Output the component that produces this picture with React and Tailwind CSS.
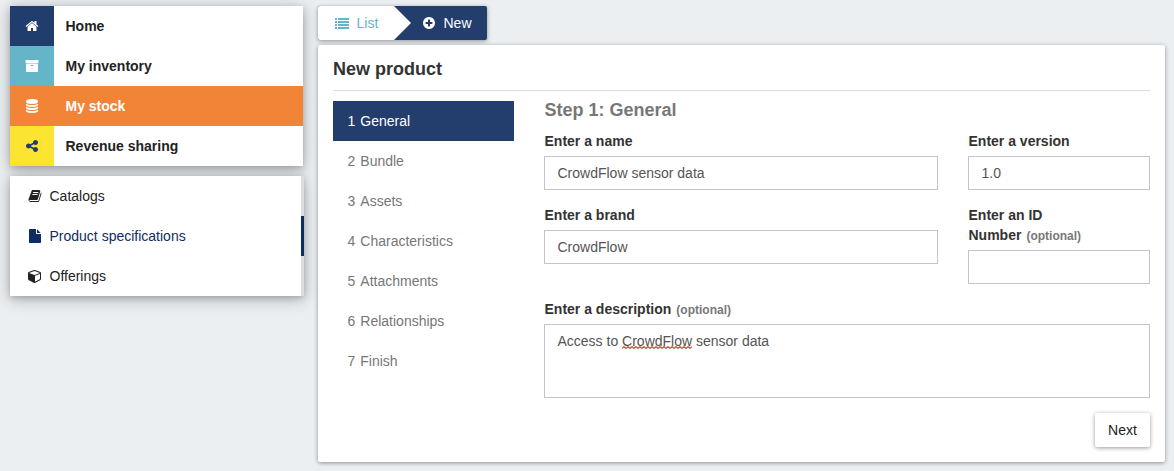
const paths = {
  home: 'M1472 992v480q0 26-19 45t-45 19h-384v-384h-256v384h-384q-26 0-45-19t-19-45v-480q0-1 .5-3t.5-3l575-474 575 474q1 2 1 6zm223-69l-62 74q-8 9-21 11h-3q-13 0-21-7l-692-577-692 577q-12 8-24 7-13-2-21-11l-62-74q-8-10-7-23.5t11-21.5l719-599q32-26 76-26t76 26l244 204v-195q0-14 9-23t23-9h192q14 0 23 9t9 23v408l219 182q10 8 11 21.5t-7 23.5z',
  archive: 'M1088 832q0-26-19-45t-45-19h-256q-26 0-45 19t-19 45 19 45 45 19h256q26 0 45-19t19-45zm576-192v960q0 26-19 45t-45 19h-1408q-26 0-45-19t-19-45v-960q0-26 19-45t45-19h1408q26 0 45 19t19 45zm64-448v256q0 26-19 45t-45 19h-1536q-26 0-45-19t-19-45v-256q0-26 19-45t45-19h1536q26 0 45 19t19 45z',
  database: 'M896 768q237 0 443-43t325-127v170q0 69-103 128t-280 93.5-385 34.5-385-34.5-280-93.5-103-128v-170q119 84 325 127t443 43zm0 768q237 0 443-43t325-127v170q0 69-103 128t-280 93.5-385 34.5-385-34.5-280-93.5-103-128v-170q119 84 325 127t443 43zm0-384q237 0 443-43t325-127v170q0 69-103 128t-280 93.5-385 34.5-385-34.5-280-93.5-103-128v-170q119 84 325 127t443 43zm0-1152q208 0 385 34.5t280 93.5 103 128v128q0 69-103 128t-280 93.5-385 34.5-385-34.5-280-93.5-103-128v-128q0-69 103-128t280-93.5 385-34.5z',
  share: 'M1344 1024q133 0 226.5 93.5t93.5 226.5-93.5 226.5-226.5 93.5-226.5-93.5-93.5-226.5q0-12 2-34l-360-180q-92 86-218 86-133 0-226.5-93.5t-93.5-226.5 93.5-226.5 226.5-93.5q126 0 218 86l360-180q-2-22-2-34 0-133 93.5-226.5t226.5-93.5 226.5 93.5 93.5 226.5-93.5 226.5-226.5 93.5q-126 0-218-86l-360 180q2 22 2 34t-2 34l360 180q92-86 218-86z',
  book: 'M1703 478q40 57 18 129l-275 906q-19 64-76.5 107.5t-122.5 43.5h-923q-77 0-148.5-53.5t-99.5-131.5q-24-67-2-127 0-4 3-27t4-37q1-8-3-21.5t-3-19.5q2-11 8-21t16.5-23.5 16.5-23.5q23-38 45-91.5t30-91.5q3-10 .5-30t-.5-28q3-11 17-28t17-23q21-36 42-92t25-90q1-9-2.5-32t.5-28q4-13 22-30.5t22-22.5q19-26 42.5-84.5t27.5-96.5q1-8-3-25.5t-2-26.5q2-8 9-18t18-23 17-21q8-12 16.5-30.5t15-35 16-36 19.5-32 26.5-23.5 36-11.5 47.5 5.5l-1 3q38-9 51-9h761q74 0 114 56t18 130l-274 906q-36 119-71.5 153.5t-128.5 34.5h-869q-27 0-38 15-11 16-1 43 24 70 144 70h923q29 0 56-15.5t35-41.5l300-987q7-22 5-57 38 15 59 43zm-1064 2q-4 13 2 22.5t20 9.5h608q13 0 25.5-9.5t16.5-22.5l21-64q4-13-2-22.5t-20-9.5h-608q-13 0-25.5 9.5t-16.5 22.5zm-83 256q-4 13 2 22.5t20 9.5h608q13 0 25.5-9.5t16.5-22.5l21-64q4-13-2-22.5t-20-9.5h-608q-13 0-25.5 9.5t-16.5 22.5z',
  file: 'M1152 512v-472q22 14 36 28l408 408q14 14 28 36h-472zm-128 32q0 40 28 68t68 28h544v1056q0 40-28 68t-68 28h-1344q-40 0-68-28t-28-68v-1600q0-40 28-68t68-28h800v544z',
  cube: 'M896 1629l640-349v-636l-640 233v752zm-64-865l698-254-698-254-698 254zm832-252v768q0 35-18 65t-49 47l-704 384q-28 16-61 16t-61-16l-704-384q-31-17-49-47t-18-65v-768q0-40 23-73t61-47l704-256q22-8 44-8t44 8l704 256q38 14 61 47t23 73z',
  list: 'M0 256h256v256h-256zM384 256h1408v256h-1408zM0 640h256v256h-256zM384 640h1408v256h-1408zM0 1024h256v256h-256zM384 1024h1408v256h-1408zM0 1408h256v256h-256zM384 1408h1408v256h-1408z',
  plus: 'M1344 960v-128q0-26-19-45t-45-19h-256v-256q0-26-19-45t-45-19h-128q-26 0-45 19t-19 45v256h-256q-26 0-45 19t-19 45v128q0 26 19 45t45 19h256v256q0 26 19 45t45 19h128q26 0 45-19t19-45v-256h256q26 0 45-19t19-45zm320-64q0 209-103 385.5t-279.5 279.5-385.5 103-385.5-103-279.5-279.5-103-385.5 103-385.5 279.5-279.5 385.5-103 385.5 103 279.5 279.5 103 385.5z',
}

function Icon({ name, className = '' }) {
  return (
    <svg viewBox="0 0 1792 1792" fill="currentColor" className={`size-3.5 shrink-0 ${className}`}>
      <path d={paths[name]} />
    </svg>
  )
}

const mainMenu = [
  { label: 'Home', icon: 'home', row: 'text-[#222]', box: 'bg-[#203d6d] text-white' },
  { label: 'My inventory', icon: 'archive', row: 'text-[#222]', box: 'bg-[#64b5c8] text-white' },
  { label: 'My stock', icon: 'database', row: 'bg-[#f28437] text-white', box: 'text-white' },
  { label: 'Revenue sharing', icon: 'share', row: 'text-[#222]', box: 'bg-[#fbe531] text-[#203d6d]' },
]

const subMenu = [
  { label: 'Catalogs', icon: 'book' },
  { label: 'Product specifications', icon: 'file', active: true },
  { label: 'Offerings', icon: 'cube' },
]

const steps = ['General', 'Bundle', 'Assets', 'Characteristics', 'Attachments', 'Relationships', 'Finish']

function Label({ children, optional }) {
  return (
    <label className="mb-[5px] block pl-[0.5px] font-bold text-[#333]">
      {children}
      {optional && <span className="ml-[5px] text-xs text-[#777]">(optional)</span>}
    </label>
  )
}

function Field({ label, value, optional, className }) {
  return (
    <div className={className}>
      <Label optional={optional}>{label}</Label>
      <input
        defaultValue={value}
        className="block h-[34px] w-full border border-[#c4c4c4] bg-white px-[12.5px] text-[#555] outline-none"
      />
    </div>
  )
}

function Squiggle() {
  const points = Array.from({ length: 36 }, (_, i) => `${i * 2},${i % 2 ? 0.6 : 2.4}`).join(' ')
  return (
    <svg className="absolute top-[15px] left-0 h-[3px] w-[70px]" viewBox="0 0 70 3">
      <polyline points={points} fill="none" stroke="#f0301c" strokeWidth="1.1" />
    </svg>
  )
}

export default function App() {
  return (
    <div className="flex h-[471px] w-[1174px] gap-[14px] overflow-hidden bg-[#ebeff2] pt-1.5 pl-2.5 font-['Liberation_Sans',Arial,sans-serif] text-sm leading-5">
      <aside className="flex w-[294px] shrink-0 flex-col gap-2.5">
        <nav className="w-[293px] bg-white shadow-[0_2px_6px_rgba(0,0,0,0.18),0_3px_16px_rgba(0,0,0,0.25)]">
          {mainMenu.map((m) => (
            <a key={m.label} className={`flex h-10 items-center font-bold ${m.row}`}>
              <span className={`mr-[11.5px] flex h-10 w-11 items-center justify-center ${m.box}`}>
                <Icon name={m.icon} />
              </span>
              {m.label}
            </a>
          ))}
        </nav>
        <nav className="bg-white shadow-[0_2px_6px_rgba(0,0,0,0.18),0_3px_16px_rgba(0,0,0,0.25)]">
          {subMenu.map((m) => (
            <a
              key={m.label}
              className={`flex h-10 items-center gap-2 border-r-[3px] pl-[17.5px] ${
                m.active ? 'border-[#0f2d62] text-[#0f2d62]' : 'border-[#dcdddd] text-[#222]'
              }`}
            >
              <Icon name={m.icon} />
              {m.label}
            </a>
          ))}
        </nav>
      </aside>

      <main className="w-[847px] shrink-0">
        <div className="mb-[5px] flex h-[34px] w-[169px] rounded-xs bg-[#233d6c] text-white shadow-[0_1px_4px_rgba(0,0,0,0.4)]">
          <a className="flex w-[76px] items-center gap-[7.5px] rounded-l-xs bg-white pl-[17px] text-[#64b5c8]">
            <Icon name="list" />
            List
          </a>
          <svg className="h-[34px] w-[17px]" viewBox="0 0 17 34">
            <path d="M0 0L17 17L0 34Z" fill="#fff" />
          </svg>
          <a className="flex items-center gap-2 pl-[10.5px]">
            <Icon name="plus" />
            New
          </a>
        </div>

        <section className="h-[417px] rounded-xs bg-white px-[15px] shadow-[0_1px_4px_rgba(0,0,0,0.4)]">
          <h1 className="h-[46px] border-b border-[#ddd] pt-3.5 text-lg leading-5 font-bold text-[#333]">New product</h1>
          <div className="flex gap-[30px] pt-2.5">
            <ol className="w-[181px] shrink-0">
              {steps.map((s, i) => (
                <li
                  key={s}
                  className={`flex h-10 items-center gap-[5px] pl-[14.5px] ${i === 0 ? 'bg-[#233d6c] text-white' : 'text-[#777]'}`}
                >
                  <span>{i + 1}</span>
                  <span>{s}</span>
                </li>
              ))}
            </ol>
            <form className="flex-1">
              <h2 className="mb-[11px] pl-[0.5px] text-lg leading-[19px] font-bold text-[#777]">Step 1: General</h2>
              <div className="grid grid-cols-[394px_182px] gap-x-[30px] gap-y-[15px]">
                <Field label="Enter a name" value="CrowdFlow sensor data" />
                <Field label="Enter a version" value="1.0" />
                <Field label="Enter a brand" value="CrowdFlow" />
                <Field label={<>Enter an ID<br />Number</>} value="" optional />
                <div className="col-span-2">
                  <Label optional>Enter a description</Label>
                  <div className="h-[74px] border border-[#c4c4c4] px-[12.5px] py-1.5 text-[#555]">
                    Access to{' '}
                    <span className="relative inline-block">
                      CrowdFlow
                      <Squiggle />
                    </span>{' '}
                    sensor data
                  </div>
                </div>
              </div>
              <div className="mt-[15px] flex justify-end">
                <button
                  type="button"
                  className="h-[34px] w-[55px] rounded-xs bg-white text-[#222] shadow-[0_1px_4px_rgba(0,0,0,0.4)]"
                >
                  Next
                </button>
              </div>
            </form>
          </div>
        </section>
      </main>
    </div>
  )
}
